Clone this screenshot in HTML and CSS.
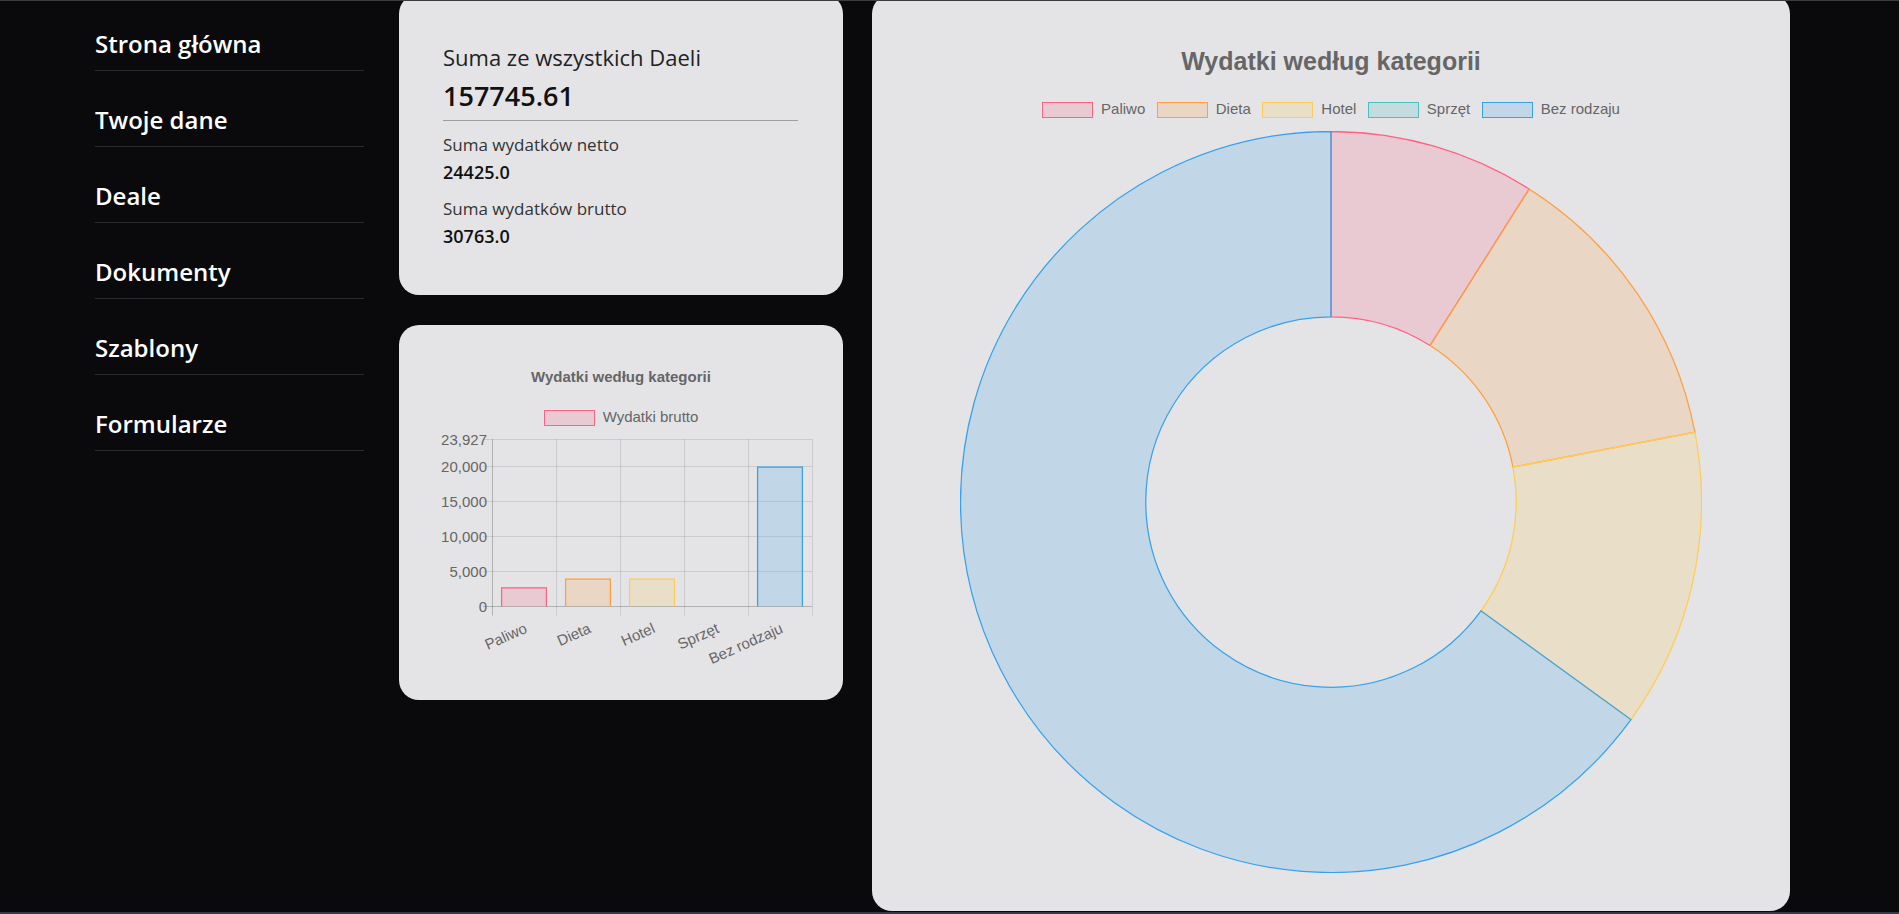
FILE: index.html
```html
<!DOCTYPE html>
<html lang="pl">
<head>
    <meta charset="UTF-8">
    <meta name="viewport" content="width=device-width, initial-scale=1.0">
    <title>Panel</title>
    <link rel="stylesheet" href="styles.css">
</head>
<body>
    <div class="screen-edge"></div>

    <main class="page">
        <div class="layout">
            <nav class="sidebar">
                <a class="nav-link" href="#">Strona główna</a>
                <a class="nav-link" href="#">Twoje dane</a>
                <a class="nav-link" href="#">Deale</a>
                <a class="nav-link" href="#">Dokumenty</a>
                <a class="nav-link" href="#">Szablony</a>
                <a class="nav-link" href="#">Formularze</a>
            </nav>

            <div class="summary-col">
                <section class="card stats-card">
                    <h5 class="stats-title">Suma ze wszystkich Daeli</h5>
                    <div class="stats-total">157745.61</div>
                    <hr class="stats-line">
                    <div class="stat">
                        <div class="stat-label">Suma wydatków netto</div>
                        <div class="stat-value">24425.0</div>
                    </div>
                    <div class="stat">
                        <div class="stat-label">Suma wydatków brutto</div>
                        <div class="stat-value">30763.0</div>
                    </div>
                </section>

                <section class="card bar-card">
                    <h6 class="chart-title">Wydatki według kategorii</h6>
                    <div class="legend">
                        <span class="legend-item"><i class="swatch pink"></i><span>Wydatki brutto</span></span>
                    </div>
                    <svg class="bar-chart" width="444" height="250" viewBox="0 0 444 250">
                        <g class="grid">
                            <path d="M84 13.5H413M84 40.5H413M84 75.5H413M84 110.5H413M84 145.5H413"/>
                            <path d="M157.5 13V189.5M221.5 13V189.5M285.5 13V189.5M349.5 13V189.5M413.5 13V189.5"/>
                        </g>
                        <g class="axis">
                            <path d="M84 180.5H413"/>
                            <path d="M93.5 13V189.5"/>
                        </g>
                        <g class="ticks" text-anchor="end">
                            <text x="88" y="18.5">23,927</text>
                            <text x="88" y="45.5">20,000</text>
                            <text x="88" y="80.5">15,000</text>
                            <text x="88" y="115.5">10,000</text>
                            <text x="88" y="150.5">5,000</text>
                            <text x="88" y="185.5">0</text>
                        </g>
                        <g class="bars">
                            <rect class="fill-pink" x="102" y="161.2" width="46" height="19.3"/>
                            <path class="line-pink" d="M102.6 180.5V161.8H147.4V180.5"/>
                            <rect class="fill-orange" x="166" y="152.5" width="46" height="28"/>
                            <path class="line-orange" d="M166.6 180.5V153.1H211.4V180.5"/>
                            <rect class="fill-yellow" x="230" y="152.5" width="46" height="28"/>
                            <path class="line-yellow" d="M230.6 180.5V153.1H275.4V180.5"/>
                            <rect class="fill-blue" x="358" y="40.5" width="46" height="140"/>
                            <path class="line-blue" d="M358.6 180.5V41.1H403.4V180.5"/>
                        </g>
                        <g class="ticks" text-anchor="end">
                            <text transform="translate(129 206) rotate(-24)">Paliwo</text>
                            <text transform="translate(193 206) rotate(-24)">Dieta</text>
                            <text transform="translate(257 206) rotate(-24)">Hotel</text>
                            <text transform="translate(321 206) rotate(-24)">Sprzęt</text>
                            <text transform="translate(385 206) rotate(-24)">Bez rodzaju</text>
                        </g>
                    </svg>
                </section>
            </div>

            <section class="card donut-card">
                <h3 class="chart-title chart-title-lg">Wydatki według kategorii</h3>
                <div class="legend">
                    <span class="legend-item"><i class="swatch pink"></i><span>Paliwo</span></span>
                    <span class="legend-item"><i class="swatch orange"></i><span>Dieta</span></span>
                    <span class="legend-item"><i class="swatch yellow"></i><span>Hotel</span></span>
                    <span class="legend-item"><i class="swatch teal"></i><span>Sprzęt</span></span>
                    <span class="legend-item"><i class="swatch blue"></i><span>Bez rodzaju</span></span>
                </div>
                <svg class="donut" width="742" height="742" viewBox="0 0 742 742">
                    <path class="fill-pink line-pink" d="M371 0.5A370.5 370.5 0 0 1 569.17 57.94L470.08 214.47A185.25 185.25 0 0 0 371 185.75Z"/>
                    <path class="fill-orange line-orange" d="M569.17 57.94A370.5 370.5 0 0 1 734.87 301.22L552.94 336.11A185.25 185.25 0 0 0 470.08 214.47Z"/>
                    <path class="fill-yellow line-yellow" d="M734.87 301.22A370.5 370.5 0 0 1 670.92 588.54L520.96 479.77A185.25 185.25 0 0 0 552.94 336.11Z"/>
                    <path class="fill-blue line-blue" d="M670.92 588.54A370.5 370.5 0 1 1 371 0.5L371 185.75A185.25 185.25 0 1 0 520.96 479.77Z"/>
                </svg>
            </section>
        </div>
    </main>

    <div class="taskbar-edge"></div>
</body>
</html>
```

FILE: styles.css
```css
* {
    box-sizing: border-box;
}
html, body {
    margin: 0;
    height: 100%;
}
body {
    display: flex;
    flex-direction: column;
    background-color: #0a0a0c;
    font-family: 'Open Sans', 'Noto Sans', sans-serif;
    color: #212529;
    overflow: hidden;
}
.screen-edge {
    height: 1px;
    background-color: #3c3c3e;
    flex-shrink: 0;
}
.taskbar-edge {
    height: 2px;
    background-color: #343a4c;
    flex-shrink: 0;
}
.page {
    flex: 1;
    overflow: hidden;
}
.layout {
    display: grid;
    grid-template-columns: 275px 444px 918px;
    column-gap: 29px;
    align-items: start;
    padding-left: 95px;
    margin-top: -7px;
}

/* menu */
.sidebar {
    display: flex;
    flex-direction: column;
    gap: 33px;
    padding-top: 34px;
    padding-right: 6px;
}
.nav-link {
    display: block;
    color: #fff;
    text-decoration: none;
    font-size: 24px;
    font-weight: 600;
    line-height: 32px;
    padding-bottom: 10px;
    border-bottom: 1px solid #2a2a2d;
}

.card {
    background-color: #e4e4e6;
    border-radius: 20px;
}
.summary-col {
    display: flex;
    flex-direction: column;
    gap: 30px;
}

/* sums */
.stats-card {
    padding: 50px 45px 48px 44px;
}
.stats-title {
    margin: 0;
    font-size: 22px;
    font-weight: 400;
    line-height: 26px;
    color: #222;
}
.stats-total {
    margin-top: 9px;
    font-size: 27px;
    font-weight: 600;
    line-height: 34px;
    color: #111;
}
.stats-line {
    margin: 7px 0 0;
    border: none;
    height: 1px;
    background-color: #9d9da2;
}
.stat {
    margin-top: 13px;
}
.stat + .stat {
    margin-top: 15px;
}
.stat-label {
    font-size: 17px;
    line-height: 22px;
    color: #333;
}
.stat-value {
    margin-top: 5px;
    font-size: 18px;
    font-weight: 600;
    line-height: 22px;
    color: #111;
}

/* charts */
.chart-title {
    margin: 0;
    text-align: center;
    font-family: 'Liberation Sans', Arial, sans-serif;
    font-size: 15px;
    font-weight: bold;
    line-height: 15px;
    color: #666;
}
.legend {
    display: flex;
    justify-content: center;
    gap: 11.5px;
    font-family: 'Liberation Sans', Arial, sans-serif;
    font-size: 15px;
    line-height: 16px;
    color: #666;
}
.legend-item {
    display: flex;
    align-items: flex-start;
    gap: 8px;
}
.legend-item span {
    margin-top: -1.5px;
}
.swatch {
    display: block;
    width: 51px;
    height: 16px;
    border: 1.5px solid;
}
.swatch.pink { background: rgba(255, 99, 132, 0.2); border-color: rgb(255, 99, 132); }
.swatch.orange { background: rgba(255, 159, 64, 0.2); border-color: rgb(255, 159, 64); }
.swatch.yellow { background: rgba(255, 205, 86, 0.2); border-color: rgb(255, 205, 86); }
.swatch.teal { background: rgba(75, 192, 192, 0.2); border-color: rgb(75, 192, 192); }
.swatch.blue { background: rgba(54, 162, 235, 0.2); border-color: rgb(54, 162, 235); }

.fill-pink { fill: rgba(255, 99, 132, 0.2); }
.fill-orange { fill: rgba(255, 159, 64, 0.2); }
.fill-yellow { fill: rgba(255, 205, 86, 0.2); }
.fill-blue { fill: rgba(54, 162, 235, 0.2); }
.line-pink { stroke: rgb(255, 99, 132); }
.line-orange { stroke: rgb(255, 159, 64); }
.line-yellow { stroke: rgb(255, 205, 86); }
.line-blue { stroke: rgb(54, 162, 235); }

.bar-card {
    padding: 44px 0 24px;
}
.bar-card .chart-title {
    margin-bottom: 26px;
}
.bar-chart {
    display: block;
}
.bar-chart .grid path {
    fill: none;
    stroke: rgba(0, 0, 0, 0.1);
    stroke-width: 1;
}
.bar-chart .axis path {
    fill: none;
    stroke: rgba(0, 0, 0, 0.22);
    stroke-width: 1;
}
.bar-chart .bars path {
    fill: none;
    stroke-width: 1.25;
}
.ticks text {
    font-family: 'Liberation Sans', Arial, sans-serif;
    font-size: 15px;
    fill: #666;
}

.donut-card {
    height: 917px;
    padding-top: 55px;
}
.chart-title-lg {
    font-size: 25px;
    line-height: 25px;
    margin-bottom: 28px;
}
.donut {
    display: block;
    margin: 12.5px auto 0;
}
.donut path {
    stroke-width: 1.25;
}
```
